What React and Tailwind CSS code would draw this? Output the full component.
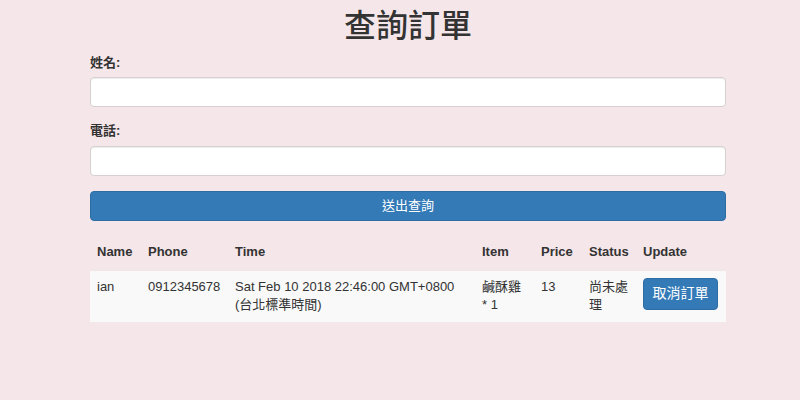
export default function App() {
  const font = { fontFamily: '"Liberation Sans", "Noto Sans CJK TC", sans-serif' };
  return (
    <div className="min-h-[400px] w-[800px] bg-[#f5e6e9] text-[#333]" style={font}>
      <div className="w-[636px] ml-[90px] pt-[9px]">
        <h1 className="text-center text-[32px] leading-[35px] font-medium text-[#333] mb-[10px]">查詢訂單</h1>
        <label className="block text-[13px] font-bold leading-[18px] mb-[5px]">姓名:</label>
        <input className="block w-full h-[30px] bg-white border border-[#d6d0d1] rounded-[4px] shadow-[inset_0_1px_1px_rgba(0,0,0,0.075)]" />
        <label className="block text-[13px] font-bold leading-[18px] mt-[15px] mb-[6px]">電話:</label>
        <input className="block w-full h-[30px] bg-white border border-[#d6d0d1] rounded-[4px] shadow-[inset_0_1px_1px_rgba(0,0,0,0.075)]" />
        <button className="block w-full h-[30px] mt-[15px] bg-[#337ab7] border border-[#2e6da4] rounded-[4px] text-white text-[13px]">送出查詢</button>
        <table className="mt-[15px] w-[636px] table-fixed border-collapse text-[13px] leading-[18.6px]">
          <colgroup>
            <col className="w-[51px]" />
            <col className="w-[87px]" />
            <col className="w-[247px]" />
            <col className="w-[59px]" />
            <col className="w-[48px]" />
            <col className="w-[54px]" />
            <col className="w-[90px]" />
          </colgroup>
          <thead>
            <tr className="text-left">
              <th className="px-[7px] py-[7px] font-bold">Name</th>
              <th className="px-[7px] py-[7px] font-bold">Phone</th>
              <th className="px-[7px] py-[7px] font-bold">Time</th>
              <th className="px-[7px] py-[7px] font-bold">Item</th>
              <th className="px-[7px] py-[7px] font-bold">Price</th>
              <th className="px-[7px] py-[7px] font-bold">Status</th>
              <th className="px-[7px] py-[7px] font-bold">Update</th>
            </tr>
          </thead>
          <tbody>
            <tr className="bg-[#f9f9f9] align-top border-t-[2px] border-[#f2e6e8]">
              <td className="px-[7px] py-[7px]">ian</td>
              <td className="px-[7px] py-[7px]">0912345678</td>
              <td className="px-[7px] py-[7px]">Sat Feb 10 2018 22:46:00 GMT+0800 <span className="whitespace-nowrap">(台北標準時間)</span></td>
              <td className="px-[7px] py-[7px]">鹹酥雞 * 1</td>
              <td className="px-[7px] py-[7px]">13</td>
              <td className="px-[7px] py-[7px]">尚未處理</td>
              <td className="px-[7px] py-[7px]">
                <button className="w-[75px] h-[32px] bg-[#337ab7] border border-[#2e6da4] rounded-[4px] text-white text-[14px] whitespace-nowrap">取消訂單</button>
              </td>
            </tr>
          </tbody>
        </table>
      </div>
    </div>
  );
}
